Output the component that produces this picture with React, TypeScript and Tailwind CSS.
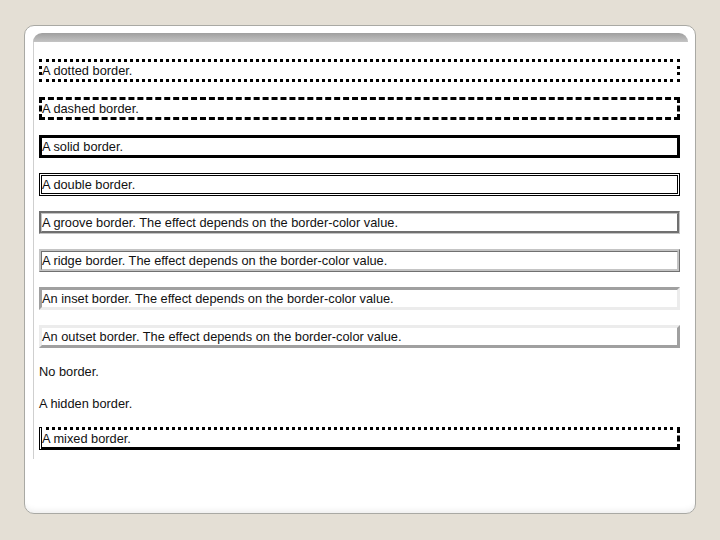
import React from 'react';

const rows: { label: string; cls: string }[] = [
  { label: 'A dotted border.', cls: 'border-[3px] border-dotted border-black' },
  { label: 'A dashed border.', cls: 'border-[3px] border-dashed border-black' },
  { label: 'A solid border.', cls: 'border-[3px] border-solid border-black' },
  { label: 'A double border.', cls: 'border-[3px] border-double border-black' },
  {
    label: 'A groove border. The effect depends on the border-color value.',
    cls: 'border-[3px] [border-style:groove] border-[#c4c4c4]',
  },
  {
    label: 'A ridge border. The effect depends on the border-color value.',
    cls: 'border-[3px] [border-style:ridge] border-[#c4c4c4]',
  },
  {
    label: 'An inset border. The effect depends on the border-color value.',
    cls: 'border-[3px] border-solid border-t-[#a0a0a0] border-l-[#a0a0a0] border-b-[#ececec] border-r-[#ececec]',
  },
  {
    label: 'An outset border. The effect depends on the border-color value.',
    cls: 'border-[3px] border-solid border-t-[#ececec] border-l-[#ececec] border-b-[#a0a0a0] border-r-[#a0a0a0]',
  },
  { label: 'No border.', cls: 'border-0' },
  { label: 'A hidden border.', cls: 'border-0' },
  {
    label: 'A mixed border.',
    cls: 'border-[3px] [border-style:dotted_dashed_solid_double] border-black',
  },
];

export default function App() {
  return (
    <div
      className="w-[720px] h-[540px] bg-[#e4dfd5] pl-[24px] pt-[25px]"
      style={{ fontFamily: '"Liberation Sans", Arial, sans-serif' }}
    >
      {/* slide card */}
      <div className="w-[672px] h-[489px] bg-white border border-[#a9a9a4] rounded-[10px] pl-[8px] pt-[7px] shadow-[inset_0_-6px_6px_-4px_rgba(0,0,0,0.08)]">
        <div className="w-[655px] h-[9px] rounded-t-[9px] bg-gradient-to-b from-[#9f9f9f] to-[#c4c4c4]" />
        <div className="w-[658px] h-[417px] border-l border-[#cfcfcf] pl-[5px] pt-[17px]">
          <div className="flex flex-col gap-[15px] w-[641px]">
            {rows.map((r) => (
              <p
                key={r.label}
                className={`${r.cls} text-[12.8px] leading-[17px] text-[#111]`}
              >
                {r.label}
              </p>
            ))}
          </div>
        </div>
      </div>
    </div>
  );
}
